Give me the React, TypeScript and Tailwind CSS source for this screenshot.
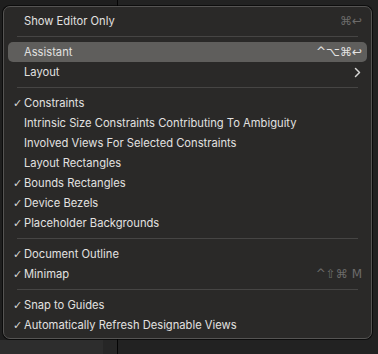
import React from "react";

type Item =
  | { type: "sep" }
  | { type: "item"; label: string; check?: boolean; shortcut?: string; highlight?: boolean; chevron?: boolean };

const items: Item[] = [
  { type: "item", label: "Show Editor Only", shortcut: "⌘↩" },
  { type: "sep" },
  { type: "item", label: "Assistant", shortcut: "^⌥⌘↩", highlight: true },
  { type: "item", label: "Layout", chevron: true },
  { type: "sep" },
  { type: "item", label: "Constraints", check: true },
  { type: "item", label: "Intrinsic Size Constraints Contributing To Ambiguity" },
  { type: "item", label: "Involved Views For Selected Constraints" },
  { type: "item", label: "Layout Rectangles" },
  { type: "item", label: "Bounds Rectangles", check: true },
  { type: "item", label: "Device Bezels", check: true },
  { type: "item", label: "Placeholder Backgrounds", check: true },
  { type: "sep" },
  { type: "item", label: "Document Outline", check: true },
  { type: "item", label: "Minimap", check: true, shortcut: "^⇧⌘ M" },
  { type: "sep" },
  { type: "item", label: "Snap to Guides", check: true },
  { type: "item", label: "Automatically Refresh Designable Views", check: true },
];

export default function App() {
  return (
    <div
      className="relative w-[378px] h-[354px] overflow-hidden bg-[#1f1f1f]"
      style={{ fontFamily: '"Inter", "Noto Sans", sans-serif' }}
    >
      {/* background app */}
      <div className="flex h-full">
        <div className="w-[117px] h-full flex flex-col">
          <div className="flex-1 bg-[#1e1e1e]" />
          <div className="h-[14px] flex">
            <div className="w-[103px] bg-[#2d2d2d]" />
            <div className="flex-1 bg-[#262626]" />
          </div>
        </div>
        <div className="w-px h-full bg-[#050505]" />
        <div className="flex-1 h-full bg-[#222222]" />
      </div>

      {/* menu */}
      <div className="absolute left-[3px] top-[6px] w-[369px] rounded-[7px] border border-[#555453] bg-[#2a2928] pt-[4px] pb-[3px] px-[4px] shadow-[0_0_0_1px_rgba(0,0,0,0.6)]">
        {items.map((it, i) =>
          it.type === "sep" ? (
            <div key={i} className="h-[11px] flex items-center px-[9px]">
              <div className="h-px w-full bg-[#464544]" />
            </div>
          ) : (
            <div
              key={i}
              className={
                "h-[20px] flex items-center rounded-[5px] pr-[5px] " +
                (it.highlight ? "bg-[#5f5e5c]" : "")
              }
            >
              <div className="w-[16px] pl-[5px] text-[11px] leading-none text-[#d6d5d4]" style={{ fontFamily: '"DejaVu Sans", sans-serif' }}>
                {it.check ? "✓" : ""}
              </div>
              <div className="flex-1 text-[11.2px] leading-none text-[#e2e1e0] pt-px">{it.label}</div>
              {it.shortcut && (
                <div
                  className={"text-[12px] leading-none " + (it.highlight ? "text-[#e4e3e2]" : "text-[#6c6b6a]")}
                  style={{ fontFamily: '"DejaVu Sans", sans-serif' }}
                >
                  {it.shortcut}
                </div>
              )}
              {it.chevron && (
                <svg width="7" height="11" viewBox="0 0 7 11" className="mr-[1px]">
                  <path d="M1.5 1.5 L5.5 5.5 L1.5 9.5" fill="none" stroke="#d8d7d6" strokeWidth="1.5" strokeLinecap="round" strokeLinejoin="round" />
                </svg>
              )}
            </div>
          )
        )}
      </div>
    </div>
  );
}
